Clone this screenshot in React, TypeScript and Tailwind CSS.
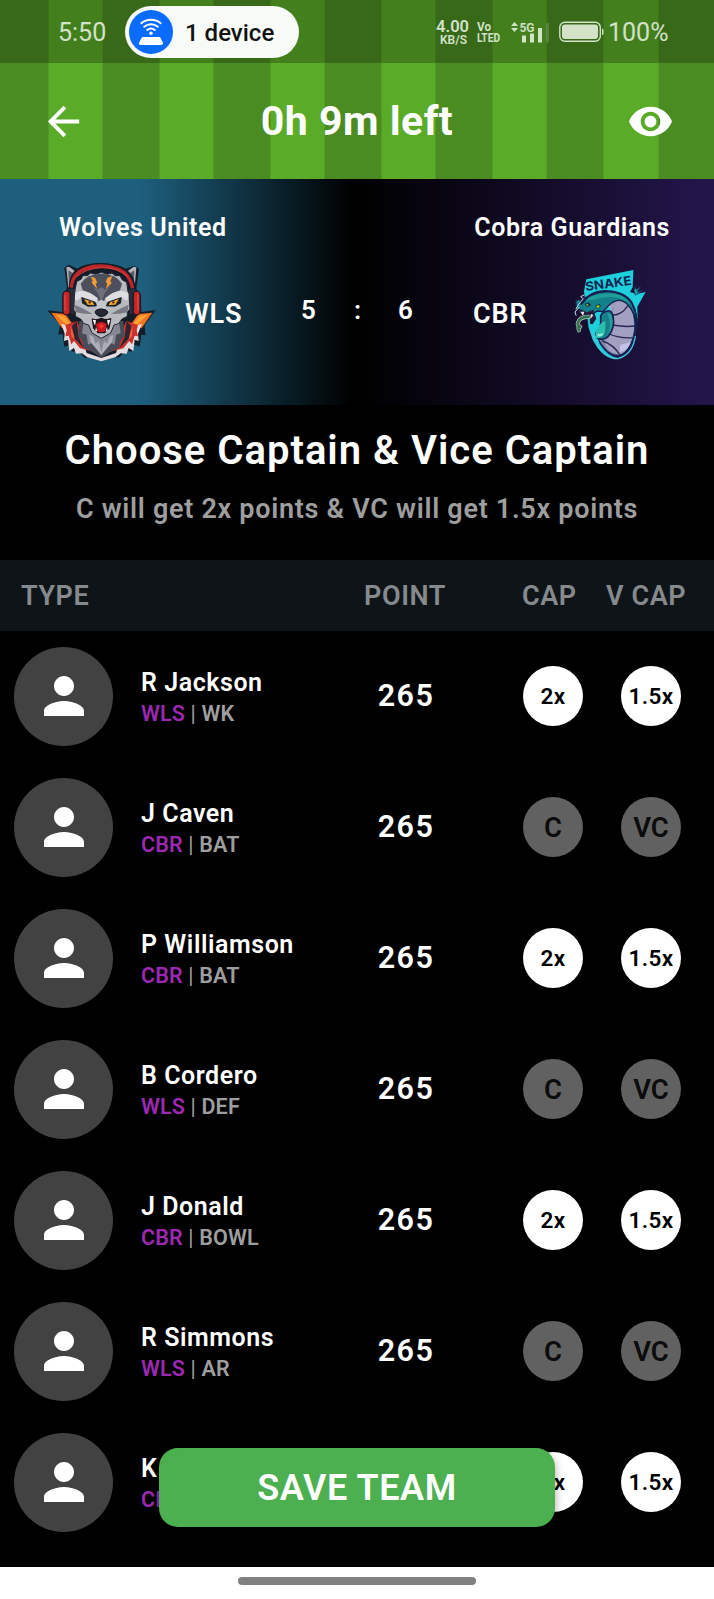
import React from "react";

type Player = { name: string; team: string; role?: string; points?: number; picked: boolean };

const players: Player[] = [
  { name: "R Jackson", team: "WLS", role: "WK", points: 265, picked: true },
  { name: "J Caven", team: "CBR", role: "BAT", points: 265, picked: false },
  { name: "P Williamson", team: "CBR", role: "BAT", points: 265, picked: true },
  { name: "B Cordero", team: "WLS", role: "DEF", points: 265, picked: false },
  { name: "J Donald", team: "CBR", role: "BOWL", points: 265, picked: true },
  { name: "R Simmons", team: "WLS", role: "AR", points: 265, picked: false },
  { name: "K", team: "CBR", picked: true },
];

function DeviceIcon() {
  return (
    <svg viewBox="0 0 44 44" className="h-11 w-11 shrink-0">
      <circle cx="22" cy="22" r="22" fill="#0a6cff" />
      <g fill="none" stroke="#fff" strokeWidth="2" strokeLinecap="round">
        <path d="M12.3 13.200c5.600-4.600 13.800-4.600 19.400 0" />
        <path d="M15.200 16.700c4-3.200 9.600-3.200 13.600 0" />
        <path d="M18.200 20c2.300-1.700 5.300-1.700 7.600 0" />
      </g>
      <circle cx="22" cy="23.300" r="1.700" fill="#fff" />
      <path d="M13.200 27.500h17.600l2.700 5.500q.5 1.500-1.500 1.500h-20q-2 0-1.500-1.500z" fill="#fff" stroke="#fff" strokeLinejoin="round" />
    </svg>
  );
}

function StatusBar() {
  return (
    <div className="flex h-[63px] items-center bg-black/25 pl-[58px] text-[#d3e2c9]">
      <span className="w-[67px] pt-[2px] text-[25px] leading-none">5:50</span>
      <div className="flex h-[52px] w-[174px] items-center rounded-full bg-[#f7faf6] pl-1">
        <DeviceIcon />
        <span className="pt-[2px] pl-[12px] text-[24px] leading-none font-medium whitespace-nowrap text-[#111]">1 device</span>
      </div>
      <svg viewBox="0 0 70 34" className="ml-[137px] h-[34px] w-[70px] shrink-0" fill="#d3e2c9" fontFamily="Roboto, sans-serif">
        <text x="0" y="17" fontSize="16.500" fontWeight="600" textLength="33" lengthAdjust="spacingAndGlyphs">4.00</text>
        <text x="4" y="29" fontSize="13" fontWeight="600" textLength="27" lengthAdjust="spacingAndGlyphs">KB/S</text>
        <text x="41" y="15.500" fontSize="12.500" fontWeight="700" textLength="14" lengthAdjust="spacingAndGlyphs">Vo</text>
        <text x="41" y="26.500" fontSize="13" fontWeight="700" textLength="23" lengthAdjust="spacingAndGlyphs">LTED</text>
      </svg>
      <svg viewBox="0 0 40 24" className="ml-[4px] h-6 w-10 shrink-0">
        <path d="M1 6l3.500-4 3.500 4zM1 8h7l-3.500 4z" fill="#d3e2c9" />
        <text x="9.500" y="11.500" fontSize="13" fontWeight="600" fill="#d3e2c9" fontFamily="Roboto, sans-serif" textLength="15" lengthAdjust="spacingAndGlyphs">5G</text>
        <path d="M12 15.500h4v7h-4zM20 13.500h4v9h-4zM28 8h4v14.500h-4z" fill="#d3e2c9" />
        <path d="M36 3h3v19.500h-3z" fill="#d3e2c9" opacity=".2" />
      </svg>
      <svg viewBox="0 0 46 22" className="ml-[8px] h-[22px] w-[46px] shrink-0">
        <rect x="1.800" y="1.300" width="40.500" height="19" rx="5" fill="none" stroke="#d3e2c9" strokeWidth="1.400" />
        <rect x="4" y="3.500" width="36" height="14.600" rx="3" fill="#d3e2c9" />
        <path d="M44 7.500q1.500 0 1.500 1.500v3.500q0 1.500-1.500 1.500z" fill="#d3e2c9" />
      </svg>
      <span className="ml-[4px] pt-[2px] text-[25px] leading-none">100%</span>
    </div>
  );
}

function Header() {
  return (
    <header className="h-[179px] shrink-0 bg-[linear-gradient(90deg,#4a8c22_48px,#5aab27_49px,#5aab27_102px,#4a8c22_103px,#4a8c22_159px,#5aab27_160px,#5aab27_213px,#4a8c22_214px,#4a8c22_270px,#5aab27_271px,#5aab27_324px,#4a8c22_325px,#4a8c22_381px,#5aab27_382px,#5aab27_435px,#4a8c22_436px,#4a8c22_492px,#5aab27_493px,#5aab27_546px,#4a8c22_547px,#4a8c22_603px,#5aab27_604px,#5aab27_658px,#4a8c22_659px)]">
      <StatusBar />
      <div className="flex h-[116px] items-center justify-between pr-[40px] pl-[40px]">
        <svg viewBox="0 0 24 24" className="h-[47px] w-[47px]" fill="#fff">
          <path d="M20 11H7.830l5.590-5.590L12 4l-8 8 8 8 1.410-1.410L7.830 13H20v-2z" />
        </svg>
        <h1 className="pt-px text-[41px] leading-none font-bold tracking-[0.5px]">0h 9m left</h1>
        <svg viewBox="0 0 24 24" className="h-[47px] w-[47px]" fill="#fff">
          <path d="M12 4.500C7 4.500 2.730 7.610 1 12c1.730 4.390 6 7.500 11 7.500s9.270-3.110 11-7.500c-1.730-4.390-6-7.500-11-7.500zM12 17c-2.760 0-5-2.240-5-5s2.240-5 5-5 5 2.240 5 5-2.240 5-5 5zm0-8c-1.660 0-3 1.340-3 3s1.340 3 3 3 3-1.340 3-3-1.340-3-3-3z" />
        </svg>
      </div>
    </header>
  );
}

function WolfLogo() {
  return (
    <svg viewBox="0 0 375 345" className="h-[115px] w-[125px] shrink-0" strokeLinejoin="round">
      <path
        d="M22 166l45 5 0-52 14-19-8-62 13-9 28 13q68-34 143-1l26-9 14 9-8 60 13 18 2 52 43-6-33 46 2 30-12-2-5 36-16-6-8 21-17-3-20 20-22 2-30 10-30-10-23-1-17-21-20 3-7-21-16 7-5-39-13 2 5-30z"
        fill="#151c29"
      />
      <path d="M34 173l42 4 24 33-34 10z" fill="#f4741f" />
      <path d="M337 173l-42 4-24 33 34 10z" fill="#f4741f" />
      <path d="M46 178l28 6 18 24-14 0z" fill="#ffa334" />
      <path d="M325 178l-28 6-18 24 14 0z" fill="#ffa334" />
      <path d="M64 206l20 6 26-10 30 92 44 15 44-15 30-92 28 10 20-6-12 30 2 22-12-4-4 34-14-9-6 17-18-1-16 12-42 12-42-12-16-12-18 1-6-17-14 9-4-34-12 4 2-22z" fill="#e3dddf" />
      <path d="M76 210l36-12 12 34 10 30 26 28-40-10-18-22-8 10-8-26-10 2 4-18z" fill="#cc302b" />
      <path d="M294 210l-36-12-12 34-10 30-26 28 40-10 18-22 8 10 8-26 10 2-4-18z" fill="#cc302b" />
      <path d="M92 212l10 28 20 30-28-26zM278 212l-10 28-20 30 28-26z" fill="#f0603c" />
      <path d="M110 198l6 48 16 34-28-28-8-38zM260 198l-6 48-16 34 28-28 8-38z" fill="#2b2530" />
      <path d="M118 198l-4 43 12 16 5 22 20 8 33 22 33-22 20-8 5-22 12-16-4-43z" fill="#494b57" />
      <path d="M130 206l-4 29 14 4 4 30 16-8 24 40 24-40 16 8 4-30 14-4-4-29z" fill="#858793" />
      <path d="M148 240l12 6 6 20 10-8 8 34 8-34 10 8 6-20 12-6-4 22-12 14-20 24-20-24-12-14z" fill="#adafb8" />
      <path d="M79 37l8-2 27 20-29 43z" fill="#b4b5ba" />
      <path d="M289 37l-8-2-27 20 30 43z" fill="#b4b5ba" />
      <path d="M85 46l22 14-20 30z" fill="#555b68" />
      <path d="M283 46l-22 14 21 30z" fill="#555b68" />
      <path
        d="M110 80l14-8 4-10 14 0 10-8 14 4 18-6 18 6 14-4 10 8 14 0 6 12 14 8 4 28 10 14-4 16 4 20-12 10 0 14-16 8-10 14-14 4-10 24-28 16-28-16-10-24-14-4-10-14-16-8 0-14-12-10 4-20-4-16 10-14z"
        fill="#b9bac0"
        stroke="#202631"
        strokeWidth="3"
      />
      <path d="M122 86q18-30 62-30t62 30l-6 20-22 8-22 14-12 34-12-34-22-14-22-8z" fill="#4d505c" />
      <path d="M158 96l16 18 10 30 10-30 16-18-14 8-12-8-12 8z" fill="#6d6f7b" />
      <path d="M100 120q10-14 28-12 24 2 44 22l-4 14-42-17-18 10z" fill="#dedee0" />
      <path d="M269 120q-10-14-28-12-24 2-44 22l4 14 42-17 18 10z" fill="#dedee0" />
      <path d="M104 149l26 12 28 16-26-1-24-4zM266 149l-26 12-28 16 26-1 24-4z" fill="#777a84" />
      <path d="M151 65l14 3 7 15-5 3 5 17-17-20 3-7zM217 63l-15 5-5 14 5 3-4 17 17-18-4-5z" fill="#f49a30" />
      <path d="M124 126l42 14 6 14-28 1-18-10z" fill="#1b222d" />
      <path d="M245 126l-42 14-6 14 28 1 18-10z" fill="#1b222d" />
      <path d="M132 132l26 9 5 9-20-1z" fill="#f5a529" />
      <path d="M237 132l-26 9-5 9 20-1z" fill="#f5a529" />
      <circle cx="149" cy="142" r="3.500" fill="#54230f" />
      <circle cx="220" cy="142" r="3.500" fill="#54230f" />
      <path d="M172 140l12-6 12 6 4 26-16-8-16 8z" fill="#c6c7cc" />
      <path d="M165 171q3-9 19-9t20 9q-3 11-20 14-16-3-19-14z" fill="#252936" stroke="#111722" strokeWidth="3" />
      <path d="M157 192q12 6 27-2 15 8 28 1l-5 28-13 14h-20l-13-14z" fill="#20141c" stroke="#20141c" strokeWidth="4" />
      <path d="M168 208q16-14 32 0l-4 20q-12 8-24 0z" fill="#cf1724" />
      <path d="M176 212l8-6 8 6-8 10z" fill="#f1352f" />
      <path d="M158 194l10 2-3 16zM211 194l-10 2 4 16zM168 216l4 14-6-3zM201 216l-4 14 6-3z" fill="#fff" />
      <path d="M94 104Q92 49 137 37t101 3q39 16 42 64" fill="none" stroke="#151c27" strokeWidth="15" />
      <path d="M94 98Q96 55 139 40t95 2q37 15 44 58" fill="none" stroke="#be2729" strokeWidth="10" />
      <path d="M109 66q28-26 75-28t79 27" fill="none" stroke="#dc4238" strokeWidth="3" />
      <path d="M83 104q12-10 23 2l-4 73-19-8zM286 104q-10-11-21 2l4 73 17-8z" fill="#292c3b" />
      <rect x="69" y="109" width="21" height="70" rx="8" fill="#c42525" stroke="#1c1620" strokeWidth="3" />
      <rect x="280" y="109" width="20" height="70" rx="8" fill="#c42525" stroke="#1c1620" strokeWidth="3" />
      <path d="M75 120v45M294 120v45" stroke="#dd4a40" strokeWidth="4" strokeLinecap="round" />
    </svg>
  );
}

function SnakeLogo() {
  return (
    <svg viewBox="0 0 300 345" className="h-[115px] w-[100px] shrink-0" strokeLinejoin="round" strokeLinecap="round">
      <path d="M72 109l7-36 141-28-2 52-8 14 20 6 27-6-25 44q5 62-18 112-23 42-58 42-36-10-58-55l-12-36z" fill="#1ed0dc" />
      <path d="M222 106q4-6 3-14l4 12 14-10-12 17 18-5-22 14z" fill="#1ba6b6" stroke="#241847" strokeWidth="2" />
      <text x="78" y="108" transform="rotate(-8 78 108)" fontFamily="Inter, sans-serif" fontSize="37" fontWeight="700" textLength="139" lengthAdjust="spacingAndGlyphs" fill="#122451">SNAKE</text>
      <path d="M65 139q22-31 67-34 59-1 85 35 25 44 10 100-15 63-51 68-30 1-57-41l-12-35 57-83z" fill="#1b2054" />
      <path d="M145 142q42-19 65 15 20 46 6 92-14 47-43 49-27-6-42-29l-13-20q34-17 43-60z" fill="#a39fc0" stroke="#a9cbdc" strokeWidth="2" />
      <path d="M165 138l-7 29 2 34q-3 43-42 54 23 43 55 46-28-10-37-31-8-18-3-28z" fill="#827fa6" />
      <path d="M158 180q25 1 44-26M158 210q38 7 66 3M148 237q33 14 72 11M128 258q31 10 52 42" fill="none" stroke="#292454" strokeWidth="4" />
      <path d="M181 269l31-7q-10 27-33 29z" fill="#d0ceff" opacity=".7" />
      <path d="M64 148q25-36 75-38 49-2 74 34 20 30 18 72-4-42-29-68-30-28-63 11l-11 11-16-2-21 13-29-10-13-13-2-20 13-6z" fill="#14808a" stroke="#171e4e" strokeWidth="4" />
      <path d="M87 126q47-18 91-6 28 8 40 34-35-35-91-26-31 6-50 11z" fill="#27bda8" opacity=".5" />
      <path d="M139 169q-18 3-17 22 3 28-14 45l4 13q18 10 33-5 21-25 14-61-5-21-20-14z" fill="#168088" stroke="#191e53" strokeWidth="5" />
      <path d="M142 175q17 40-3 67 28-27 14-65z" fill="#2fb5b0" opacity=".6" />
      <path d="M107 233q10-31 30-36l-2 34q-7 20-27 18z" fill="#2bbdae" />
      <path d="M112 237l19-2q-4 12-19 9z" fill="#b4fff0" opacity=".7" />
      <path d="M53 159l28 13 19-8 9 27-11 17-8-2-1-22-15-7-16-4z" fill="#241c3e" />
      <path d="M61 170l8 12 4-12zM93 177l-2 16 9-13z" fill="#ece6ee" />
      <path d="M86 185q-29 1-32 18-4 9 7 12-9 1-4 11" fill="none" stroke="#b4c8c0" strokeWidth="12" />
      <path d="M86 185q-29 1-32 18-4 9 7 12-9 1-4 11" fill="none" stroke="#32704f" strokeWidth="8" />
      <path d="M57 157l-12 14 3 10M72 120l-10 5 8 6-14 17-8 14" fill="none" stroke="#c3e0e6" strokeWidth="3" />
      <path d="M74 147l12-5 8 9-13 5zM105 153l13-7 5 8-10 7z" fill="#132f48" />
      <path d="M78 149l5-2 3 4-5 1zM108 154l9-4 2 5-6 4z" fill="#9be31d" />
      <path d="M93 228l19 43q22 39 61 40 45-12 53-67" fill="none" stroke="#45c5db" strokeWidth="4" />
    </svg>
  );
}

function MatchCard() {
  return (
    <section className="h-[226px] shrink-0 bg-[linear-gradient(90deg,#1e5f7e_0,#1e5f7e_140px,#000_352px,#000_360px,#23154a_700px)]">
      <div className="flex h-[76px] items-center justify-between pt-[20px] pr-[44px] pl-[59px] text-[25px] leading-none font-semibold">
        <span className="tracking-[0.6px]">Wolves United</span>
        <span className="tracking-[0.6px]">Cobra Guardians</span>
      </div>
      <div className="flex h-[115px] items-center pl-[40px] text-[27px] leading-none font-semibold">
        <WolfLogo />
        <span className="w-[98px] pt-[4px] pl-5 tracking-[0.8px]">WLS</span>
        <div className="flex w-[188px] pb-[5px] text-center text-[26px]">
          <span className="w-[91px]">5</span>
          <span className="w-[6px]">:</span>
          <span className="w-[91px]">6</span>
        </div>
        <span className="w-[109px] pt-[4px] pl-[22px] tracking-[0.8px]">CBR</span>
        <SnakeLogo />
      </div>
    </section>
  );
}

function Badge({ picked, label, on }: { picked: boolean; label: string; on: string }) {
  return picked ? (
    <span className="flex h-[60px] w-[60px] shrink-0 items-center justify-center rounded-full bg-white pt-px text-[22.5px] leading-none font-semibold tracking-[0.4px] text-black">
      {on}
    </span>
  ) : (
    <span className="flex h-[60px] w-[60px] shrink-0 items-center justify-center rounded-full bg-[#616161] pt-[2px] text-[27.5px] leading-none font-semibold text-black/90">
      {label}
    </span>
  );
}

function PlayerRow({ player }: { player: Player }) {
  return (
    <li className="flex h-[131px] shrink-0 items-center pb-px pl-[14px]">
      <span className="flex h-[99px] w-[99px] shrink-0 items-center justify-center rounded-full bg-[#424242]">
        <svg viewBox="0 0 24 24" className="h-[60px] w-[60px]" fill="#fff">
          <path d="M12 12c2.210 0 4-1.790 4-4s-1.790-4-4-4-4 1.790-4 4 1.790 4 4 4zm0 2c-2.670 0-8 1.340-8 4v2h16v-2c0-2.660-5.330-4-8-4z" />
        </svg>
      </span>
      <div className="w-[219px] pt-[5px] pl-[28px]">
        <div className="text-[25px] leading-[30px] font-semibold tracking-[0.55px] whitespace-nowrap">{player.name}</div>
        <div className="text-[21.5px] leading-[31px] font-semibold tracking-[0.15px] whitespace-nowrap text-[#9e9e9e]">
          <span className="text-[#9c27b0]">{player.team}</span>
          {player.role && (
            <>
              <span className="font-normal"> | </span>
              {player.role}
            </>
          )}
        </div>
      </div>
      <span className="w-[148px] pt-px text-center text-[30.5px] leading-none font-semibold tracking-[1.4px]">{player.points}</span>
      <div className="ml-[43px] flex gap-[38px]">
        <Badge picked={player.picked} on="2x" label="C" />
        <Badge picked={player.picked} on="1.5x" label="VC" />
      </div>
    </li>
  );
}

export default function App() {
  return (
    <div className="relative flex h-[1599px] w-[714px] flex-col overflow-hidden bg-black font-['Roboto',sans-serif] text-white">
      <Header />
      <MatchCard />
      <section className="flex h-[155px] shrink-0 flex-col items-center pt-[26px] whitespace-nowrap">
        <h2 className="text-[40px] leading-[40px] font-semibold tracking-[1px]">Choose Captain &amp; Vice Captain</h2>
        <p className="pt-[22px] text-[27px] leading-[32px] font-semibold tracking-[0.71px] text-[#9e9e9e]">C will get 2x points &amp; VC will get 1.5x points</p>
      </section>
      <div className="flex h-[71px] shrink-0 items-center bg-[#0f1418] pt-[2px] pl-[21px] text-[27px] leading-none font-semibold tracking-[0.6px] whitespace-nowrap text-[#868a8d]">
        <span className="w-[343px]">TYPE</span>
        <span className="w-[158px]">POINT</span>
        <span className="w-[84px]">CAP</span>
        <span>V CAP</span>
      </div>
      <ul className="flex h-[936px] shrink-0 flex-col overflow-hidden">
        {players.map((p, i) => (
          <PlayerRow key={i} player={p} />
        ))}
      </ul>
      <button className="absolute top-[1448px] left-[159px] flex h-[79px] w-[396px] items-center justify-center rounded-[19px] bg-[#4caf50] text-[36px] leading-none font-semibold tracking-[0.6px] shadow-[0_4px_10px_rgba(0,0,0,0.35)]">
        SAVE TEAM
      </button>
      <footer className="flex h-[32px] shrink-0 justify-center bg-white pt-[10px]">
        <span className="h-2 w-[238px] rounded-full bg-[#808080]" />
      </footer>
    </div>
  );
}
